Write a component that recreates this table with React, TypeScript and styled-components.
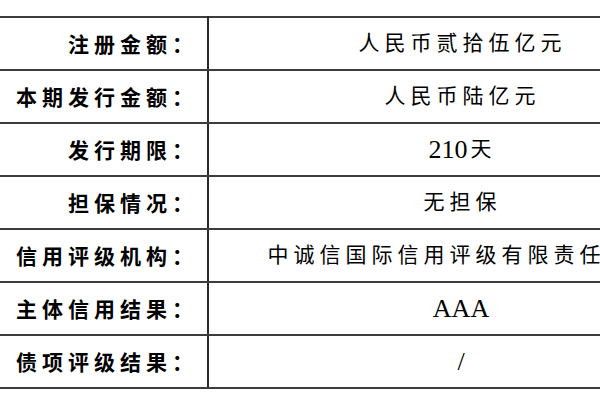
import { FC, ReactNode } from 'react'
import styled, { createGlobalStyle } from 'styled-components'

const GlobalStyle = createGlobalStyle`
  html, body {
    margin: 0;
    padding: 0;
    background: #ffffff;
    overflow: hidden;
  }
`

const Page = styled.div`
  width: 600px;
  height: 400px;
  overflow: hidden;
  padding-top: 16px;
  box-sizing: border-box;
`

const Table = styled.table`
  border-collapse: collapse;
  width: 716px;
  table-layout: fixed;
  color: #000;
`

const Row = styled.tr`
  height: 53px;
`

const Label = styled.td`
  width: 198px;
  padding: 0 9px 0 0;
  border-top: 2px solid #3c3c3c;
  border-bottom: 2px solid #3c3c3c;
  border-right: 2px solid #2a2a2a;
  text-align: right;
  font-family: 'Noto Sans CJK SC', sans-serif;
  font-weight: 700;
  font-size: 21px;
  letter-spacing: 5px;
  line-height: 1;
  white-space: nowrap;
`

const Value = styled.td`
  padding: 0;
  border-top: 2px solid #3c3c3c;
  border-bottom: 2px solid #3c3c3c;
  text-align: center;
  font-family: 'Liberation Serif', 'Noto Sans CJK SC', serif;
  font-weight: 400;
  font-size: 21px;
  letter-spacing: 5px;
  line-height: 1;
  white-space: nowrap;
  overflow: hidden;
`

const Latin = styled.span`
  font-family: 'Liberation Serif', serif;
  font-size: 26px;
  letter-spacing: 0;
  margin-right: 3px;
  vertical-align: -2px;
`

type Item = { label: string; value: ReactNode }

const ROWS: Item[] = [
  { label: '注册金额：', value: '人民币贰拾伍亿元' },
  { label: '本期发行金额：', value: '人民币陆亿元' },
  { label: '发行期限：', value: <><Latin>210</Latin>天</> },
  { label: '担保情况：', value: '无担保' },
  { label: '信用评级机构：', value: '中诚信国际信用评级有限责任公司' },
  { label: '主体信用结果：', value: <Latin>AAA</Latin> },
  { label: '债项评级结果：', value: <Latin>/</Latin> },
]

const App: FC = () => (
  <Page>
    <GlobalStyle />
    <Table>
      <tbody>
        {ROWS.map(row => (
          <Row key={row.label}>
            <Label>{row.label}</Label>
            <Value>{row.value}</Value>
          </Row>
        ))}
      </tbody>
    </Table>
  </Page>
)

export default App
